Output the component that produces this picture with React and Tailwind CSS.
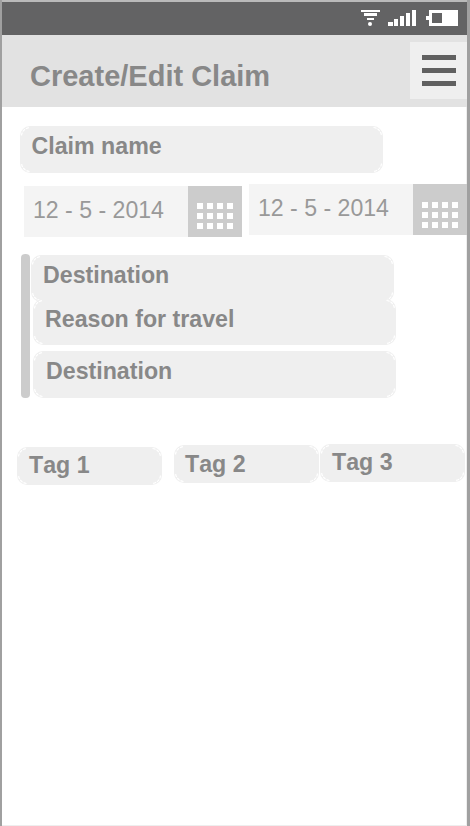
const CORNERS = [
  "left-0 top-0",
  "right-0 top-0 rotate-90",
  "right-0 bottom-0 rotate-180",
  "left-0 bottom-0 -rotate-90",
];

function Field({ label, className = "", textClass = "pl-3 pt-2" }) {
  return (
    <div className={`relative shrink-0 rounded-[10px] bg-[#efefef] ${className}`}>
      {CORNERS.map((place) => (
        <svg key={place} viewBox="0 0 12 12" className={`absolute h-3 w-3 ${place}`} fill="none" stroke="#fff">
          <path d="M1.5 9.5C1.8 5.5 5 2 9.5 1.5" strokeWidth="1.2" strokeDasharray="3.2 1" />
        </svg>
      ))}
      <div className={`relative whitespace-nowrap text-[23.2px] font-bold leading-6 text-[#888] [font-kerning:none] ${textClass}`}>{label}</div>
    </div>
  );
}

function DateField({ className = "", gridClass }) {
  return (
    <div className={`flex h-[51px] w-[218px] shrink-0 bg-[#f4f4f4] ${className}`}>
      <div className="w-[164px] whitespace-nowrap pl-[9px] pt-3 text-[23.1px] leading-6 text-[#999]">12 - 5 - 2014</div>
      <div className={`w-[54px] bg-[#ccc] pl-[9px] ${gridClass}`}>
        <div className="grid w-9 grid-cols-4 gap-1">
          {Array.from({ length: 12 }, (_, i) => (
            <span key={i} className="h-1.5 w-1.5 bg-white" />
          ))}
        </div>
      </div>
    </div>
  );
}

function StatusIcons() {
  return (
    <svg className="h-[33px] w-[110px]" viewBox="0 0 110 33" fill="#fff" shapeRendering="crispEdges">
      <path d="M4 8h19v2H4zM7 11h13v3H7zM10 16h7v2h-7z" />
      <circle cx="13" cy="22" r="2" shapeRendering="auto" />
      <path d="M31 20h5v4h-5zM37 17h4v7h-4zM43 14h4v10h-4zM49 11h4v13h-4zM55 8h4v16h-4z" />
      <path fillRule="evenodd" d="M72 8h29v16H72v-6h-3v-4h3zM75 11v10h10V11z" />
    </svg>
  );
}

export default function App() {
  return (
    <div className="flex h-[826px] w-[470px] flex-col overflow-hidden bg-[#a0a0a0] pl-0.5 pr-[3px] font-['Liberation_Sans',Arial,sans-serif]">
      <div className="h-0.5 w-[465px] shrink-0 bg-[#bababa]" />
      <div className="flex h-[33px] shrink-0 justify-end bg-[#636364]">
        <StatusIcons />
      </div>
      <header className="flex h-[72px] shrink-0 justify-between bg-[#e2e2e2] pl-7">
        <h1 className="whitespace-nowrap pt-[25px] text-[29px] font-bold leading-8 text-[#888]">Create/Edit Claim</h1>
        <button aria-label="Menu" className="mt-[7px] flex h-[57px] w-[57px] flex-col gap-2 bg-[#efefef] pl-3 pt-[13px]">
          <span className="h-[5px] w-[34px] bg-[#606060]" />
          <span className="h-[5px] w-[34px] bg-[#606060]" />
          <span className="h-[5px] w-[34px] bg-[#606060]" />
        </button>
      </header>
      <main className="flex h-[718px] shrink-0 flex-col border-r border-[#eee] bg-white">
        <Field label="Claim name" className="ml-[18px] mt-[19px] h-[47px] w-[363px]" textClass="pl-[11.5px] pt-2" />
        <div className="-mr-px mt-[11px] flex h-[53px] shrink-0 gap-[7px] pl-[22px]">
          <DateField className="mt-0.5" gridClass="pt-[17px]" />
          <DateField gridClass="pt-[18px]" />
        </div>
        <section className="mt-[17px] flex h-36 shrink-0 pl-[19px]">
          <div className="w-[9px] rounded bg-[#ccc]" />
          <div className="flex flex-col pl-px pt-px">
            <Field label="Destination" className="h-[47px] w-[363px]" />
            <Field label="Reason for travel" className="-mt-[3px] ml-0.5 h-[46px] w-[363px]" textClass="pl-3 pt-2" />
            <Field label="Destination" className="ml-0.5 mt-1.5 h-[47px] w-[363px]" textClass="pl-[13px] pt-2" />
          </div>
        </section>
        <div className="mt-[46px] flex shrink-0 pl-[15px]">
          <Field label="Tag 1" className="mt-[3px] h-[38px] w-[145px]" textClass="pl-3 pt-1.5" />
          <Field label="Tag 2" className="ml-3 mt-px h-[38px] w-[145px]" textClass="pl-[11px] pt-[7px]" />
          <Field label="Tag 3" className="ml-px h-[38px] w-[145px]" textClass="pl-3 pt-1.5" />
        </div>
      </main>
      <div className="h-px shrink-0 bg-[#eee]" />
    </div>
  );
}
